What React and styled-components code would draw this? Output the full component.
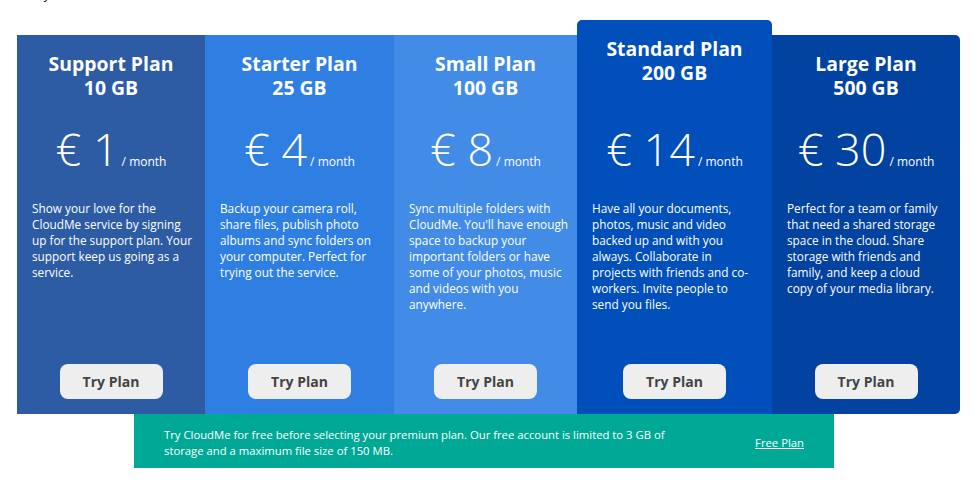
import React from "react";
import styled, { createGlobalStyle } from "styled-components";

const GlobalStyle = createGlobalStyle`
  html, body {
    margin: 0;
    padding: 0;
    background: #ffffff;
    font-family: "Open Sans", "Noto Sans", sans-serif;
    overflow: hidden;
  }
`;

const Page = styled.div`
  width: 979px;
`;

const TopBar = styled.div`
  height: 20px;
  margin-top: -16px;
  display: flex;
  align-items: center;
  justify-content: space-between;
  font-size: 13px;
  color: #222;
`;

const Group = styled.div`
  display: flex;
  align-items: center;
  gap: 8px;
  padding-right: ${(p) => p.$right || 0}px;
`;

const Radio = styled.span`
  width: 8px;
  height: 8px;
  border-radius: 50%;
  background: ${(p) => (p.$on ? "#1e88f0" : "#9a9a9a")};
  margin-left: ${(p) => p.$gap || 0}px;
`;

const Row = styled.div`
  width: 943px;
  margin: 31px 0 0 17px;
  display: flex;
  align-items: stretch;
  height: 379px;
`;

const Card = styled.div`
  width: ${(p) => p.$w}px;
  flex: none;
  background: ${(p) => p.$bg};
  color: #fff;
  display: flex;
  flex-direction: column;
  padding: 17px 15px 15px 15px;
  box-sizing: border-box;
  margin-top: ${(p) => (p.$featured ? -15 : 0)}px;
  border-radius: ${(p) => p.$radius || "0"};
`;

const Title = styled.h2`
  margin: 0 0 ${(p) => (p.$featured ? 36 : 21)}px;
  font-size: 19.4px;
  line-height: 24px;
  font-weight: 700;
  text-align: center;
`;

const Price = styled.div`
  display: flex;
  justify-content: center;
  align-items: baseline;
  gap: 3px;
  height: 56px;
  margin-bottom: 23px;
`;

const Amount = styled.span`
  font-size: 45px;
  line-height: 56px;
  font-weight: 300;
`;

const Per = styled.span`
  font-size: 12px;
`;

const Text = styled.p`
  margin: 0;
  font-size: 11.8px;
  line-height: 16px;
  white-space: nowrap;
`;

const Button = styled.button`
  margin: auto auto 0;
  width: 103px;
  height: 35px;
  border: none;
  border-radius: 8px;
  background: #eeeeee;
  color: #444;
  font-family: inherit;
  font-size: 14px;
  font-weight: 700;
  cursor: pointer;
`;

const BannerWrap = styled.div`
  padding-left: 134px;
`;

const Banner = styled.div`
  width: 700px;
  height: 54px;
  box-sizing: border-box;
  background: #00a896;
  color: #fff;
  display: flex;
  align-items: center;
  padding: 4px 30px 0;
  font-size: 11.3px;
  line-height: 16px;
`;

const BannerText = styled.p`
  margin: 0;
  width: 530px;
`;

const FreeLink = styled.a`
  margin-left: auto;
  color: #fff;
  text-decoration: underline;
`;

const plans = [
  {
    name: "Support Plan",
    size: "10 GB",
    price: "1",
    w: 188,
    bg: "#2d5ca4",
    lines: [
      "Show your love for the",
      "CloudMe service by signing",
      "up for the support plan. Your",
      "support keep us going as a",
      "service.",
    ],
  },
  {
    name: "Starter Plan",
    size: "25 GB",
    price: "4",
    w: 189,
    bg: "#2f7fe3",
    lines: [
      "Backup your camera roll,",
      "share files, publish photo",
      "albums and sync folders on",
      "your computer. Perfect for",
      "trying out the service.",
    ],
  },
  {
    name: "Small Plan",
    size: "100 GB",
    price: "8",
    w: 183,
    bg: "#428be6",
    lines: [
      "Sync multiple folders with",
      "CloudMe. You'll have enough",
      "space to backup your",
      "important folders or have",
      "some of your photos, music",
      "and videos with you",
      "anywhere.",
    ],
  },
  {
    name: "Standard Plan",
    size: "200 GB",
    price: "14",
    w: 195,
    bg: "#004fbb",
    featured: true,
    radius: "5px 5px 0 0",
    lines: [
      "Have all your documents,",
      "photos, music and video",
      "backed up and with you",
      "always. Collaborate in",
      "projects with friends and co-",
      "workers. Invite people to",
      "send you files.",
    ],
  },
  {
    name: "Large Plan",
    size: "500 GB",
    price: "30",
    w: 188,
    bg: "#0242a0",
    radius: "0 5px 5px 0",
    lines: [
      "Perfect for a team or family",
      "that need a shared storage",
      "space in the cloud. Share",
      "storage with friends and",
      "family, and keep a cloud",
      "copy of your media library.",
    ],
  },
];

export default function App() {
  return (
    <Page>
      <GlobalStyle />
      <TopBar>
        <Group>
          <Radio $gap={-3} />
          <span>Yearly</span>
        </Group>
        <Group $right={4}>
          <Radio $on />
          <span>Consumer</span>
          <Radio $gap={14} />
          <span>Business</span>
        </Group>
      </TopBar>
      <Row>
        {plans.map((p) => (
          <Card
            key={p.name}
            $w={p.w}
            $bg={p.bg}
            $featured={p.featured}
            $radius={p.radius}
          >
            <Title $featured={p.featured}>
              {p.name}
              <br />
              {p.size}
            </Title>
            <Price>
              <Amount>€ {p.price}</Amount>
              <Per>/ month</Per>
            </Price>
            <Text>
              {p.lines.map((l, i) => (
                <React.Fragment key={i}>
                  {l}
                  {i < p.lines.length - 1 && <br />}
                </React.Fragment>
              ))}
            </Text>
            <Button>Try Plan</Button>
          </Card>
        ))}
      </Row>
      <BannerWrap>
        <Banner>
          <BannerText>
            Try CloudMe for free before selecting your premium plan. Our free
            account is limited to 3 GB of storage and a maximum file size of
            150 MB.
          </BannerText>
          <FreeLink href="#">Free Plan</FreeLink>
        </Banner>
      </BannerWrap>
    </Page>
  );
}
